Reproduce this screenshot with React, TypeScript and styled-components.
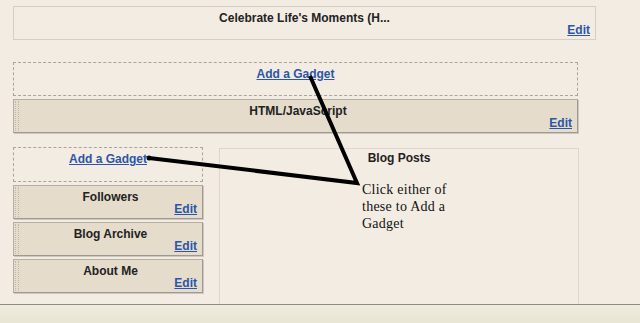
import React from "react";
import styled, { createGlobalStyle } from "styled-components";

const GlobalStyle = createGlobalStyle`
  html, body {
    margin: 0;
    padding: 0;
    background: #f3ece3;
  }
  body {
    font-family: "Liberation Sans", Arial, sans-serif;
  }
`;

const Screen = styled.div`
  position: relative;
  width: 640px;
  height: 323px;
  display: flex;
  flex-direction: column;
  overflow: hidden;
  background: #f3ece3;
`;

const Layout = styled.div`
  flex: 1;
  overflow: hidden;
  padding: 6px 0 0 13px;
  border-bottom: 1px solid #8f8b80;
  display: flex;
  flex-direction: column;
`;

const StatusBar = styled.div`
  height: 18px;
  background: linear-gradient(#efecdd, #e8e5d4);
`;

const Title = styled.div`
  font-size: 12px;
  font-weight: bold;
  color: #222;
  line-height: 14px;
  text-align: center;
`;

const EditLink = styled.a`
  display: block;
  margin-top: -1px;
  text-align: right;
  font-size: 12px;
  font-weight: bold;
  line-height: 12px;
  color: #2b56a8;
  text-decoration: underline;
  cursor: pointer;
`;

const HeaderBox = styled.div`
  box-sizing: border-box;
  width: 583px;
  height: 34px;
  border: 1px solid #d4cec5;
  padding: 4px 5px 0;
`;

const GadgetSlot = styled.div<{ $width: number; $height: number }>`
  box-sizing: border-box;
  width: ${(p) => p.$width}px;
  height: ${(p) => p.$height}px;
  border: 1px dashed #aaa59c;
  padding-top: 3px;
  line-height: 14px;
  text-align: center;
`;

const AddLink = styled.a`
  font-size: 12px;
  font-weight: bold;
  line-height: 14px;
  color: #2b56a8;
  text-decoration: underline;
  cursor: pointer;
`;

const WidgetBox = styled.div<{ $width: number }>`
  box-sizing: border-box;
  width: ${(p) => p.$width}px;
  height: 34px;
  display: flex;
  background: #e5dccc;
  border: 1px solid #b4aea5;
  border-right-color: #9f9a91;
  border-bottom-color: #9f9a91;
  box-shadow: 1px 1px 0 #cdc7be;
`;

const Grip = styled.div`
  width: 2px;
  margin: 1px 0 1px 1px;
  border-left: 1px dotted #bdb7ad;
  border-right: 1px dotted #bdb7ad;
`;

const WidgetBody = styled.div`
  flex: 1;
  padding: 4px 5px 0;
`;

const Stack = styled.div<{ $gap: number; $top?: number }>`
  display: flex;
  flex-direction: column;
  gap: ${(p) => p.$gap}px;
  margin-top: ${(p) => p.$top ?? 0}px;
`;

const Columns = styled.div`
  display: flex;
  align-items: stretch;
  gap: 16px;
  margin-top: 14px;
  flex: 1;
`;

const PostsBox = styled.div`
  box-sizing: border-box;
  width: 360px;
  margin-top: 1px;
  border: 1px solid #ddd6cc;
  border-bottom: none;
  padding-top: 2px;
`;

const Note = styled.div`
  position: absolute;
  left: 362px;
  top: 181px;
  width: 100px;
  font-family: "Liberation Serif", "Times New Roman", serif;
  font-size: 14px;
  letter-spacing: 0.25px;
  line-height: 17px;
  color: #111;
`;

const Arrows = styled.svg`
  position: absolute;
  left: 0;
  top: 0;
  pointer-events: none;
`;

const Widget = ({ title, width }: { title: string; width: number }) => (
  <WidgetBox $width={width}>
    <Grip />
    <WidgetBody>
      <Title>{title}</Title>
      <EditLink>Edit</EditLink>
    </WidgetBody>
  </WidgetBox>
);

const sidebar = ["Followers", "Blog Archive", "About Me"];

export default function App() {
  return (
    <Screen>
      <GlobalStyle />
      <Layout>
        <HeaderBox>
          <Title>Celebrate Life's Moments (H...</Title>
          <EditLink>Edit</EditLink>
        </HeaderBox>
        <Stack $gap={3} $top={22}>
          <GadgetSlot $width={565} $height={34}>
            <AddLink>Add a Gadget</AddLink>
          </GadgetSlot>
          <Widget title="HTML/JavaScript" width={565} />
        </Stack>
        <Columns>
          <Stack $gap={3}>
            <GadgetSlot $width={190} $height={35}>
              <AddLink>Add a Gadget</AddLink>
            </GadgetSlot>
            {sidebar.map((t) => (
              <Widget key={t} title={t} width={190} />
            ))}
          </Stack>
          <PostsBox>
            <Title>Blog Posts</Title>
          </PostsBox>
        </Columns>
      </Layout>
      <StatusBar />
      <Arrows width="640" height="323">
        <polyline
          points="310,76 357,183 149,158"
          fill="none"
          stroke="#000"
          strokeWidth="4"
          strokeLinejoin="miter"
        />
        <circle cx="149" cy="158" r="2.5" fill="#000" />
      </Arrows>
      <Note>Click either of these to Add a Gadget</Note>
    </Screen>
  );
}
